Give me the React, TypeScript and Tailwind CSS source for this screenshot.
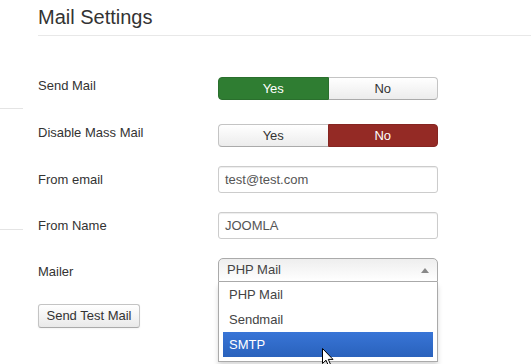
import React from "react";

type YesNoProps = {
  value: "yes" | "no";
};

const baseBtn =
  "flex-1 flex items-center justify-center text-[13px] leading-none border";
const plainBtn =
  "bg-gradient-to-b from-white to-[#ececec] text-[#333] border-[#c4c4c4] border-b-[#aaa]";

function YesNo({ value }: YesNoProps) {
  const yesActive = value === "yes";
  return (
    <div className="flex h-[23px] w-[220px]">
      <div
        className={
          baseBtn +
          " rounded-l-[4px] " +
          (yesActive
            ? "bg-[#2f7d32] border-[#2a6f2d] text-white"
            : plainBtn + " border-r-0")
        }
      >
        Yes
      </div>
      <div
        className={
          baseBtn +
          " rounded-r-[4px] " +
          (!yesActive
            ? "bg-[#942a25] border-[#852521] text-white"
            : plainBtn + " border-l-0")
        }
      >
        No
      </div>
    </div>
  );
}

// mouse pointer hovering the SMTP option
function Cursor() {
  return (
    <svg width="12" height="19" viewBox="0 0 12 19" className="absolute left-[322px] top-[348px] z-20">
      <path
        d="M0.5 0.5 L0.5 15.5 L4 12.2 L6.6 18 L8.8 17 L6.3 11.4 L11 11.4 Z"
        fill="#fff"
        stroke="#000"
        strokeWidth="1"
        strokeLinejoin="round"
      />
    </svg>
  );
}

export default function App() {
  const options = ["PHP Mail", "Sendmail", "SMTP"];

  return (
    <div className="relative flex h-[364px] w-[531px] overflow-hidden bg-white font-['Liberation_Sans',Arial,sans-serif] text-[#333]">
      <aside className="w-[23px] shrink-0">
        <div className="mt-[108px] h-px bg-[#e4e4e4]" />
        <div className="mt-[120px] h-px bg-[#e4e4e4]" />
      </aside>

      <main className="flex-1 pl-[15px]">
        <h2 className="pt-[6px] pb-[7px] text-[20px] leading-[22px] font-normal text-[#333] border-b border-[#e8e8e8]">
          Mail Settings
        </h2>

        <div className="mt-[41px] flex items-start">
          <label className="w-[180px] text-[13px] leading-[18px]">Send Mail</label>
          <YesNo value="yes" />
        </div>

        <div className="mt-[24px] flex items-start">
          <label className="w-[180px] text-[13px] leading-[18px]">Disable Mass Mail</label>
          <YesNo value="no" />
        </div>

        <div className="mt-[19px] flex items-start">
          <label className="w-[180px] pt-[5px] text-[13px] leading-[18px]">From email</label>
          <div className="flex h-[27px] w-[220px] items-center rounded-[3px] border border-[#ccc] px-[6px] text-[13px] text-[#555] shadow-[inset_0_1px_1px_rgba(0,0,0,0.075)]">
            test@test.com
          </div>
        </div>

        <div className="mt-[19px] flex items-start">
          <label className="w-[180px] pt-[5px] text-[13px] leading-[18px]">From Name</label>
          <div className="flex h-[27px] w-[220px] items-center rounded-[3px] border border-[#ccc] px-[6px] text-[13px] text-[#555] shadow-[inset_0_1px_1px_rgba(0,0,0,0.075)]">
            JOOMLA
          </div>
        </div>

        <div className="mt-[19px] flex items-start">
          <label className="w-[180px] pt-[5px] text-[13px] leading-[18px]">Mailer</label>
          <div className="relative w-[220px]">
            <div className="flex h-[24px] items-center justify-between rounded-t-[5px] border border-[#aaa] bg-gradient-to-b from-[#eee] to-white pl-[8px] pr-[8px] text-[13px] text-[#444]">
              <span>PHP Mail</span>
              <svg width="8" height="5" viewBox="0 0 8 5">
                <path d="M0 5 L4 0 L8 5 Z" fill="#888" />
              </svg>
            </div>
            <div className="absolute left-0 right-0 top-[24px] z-10 border border-t-0 border-[#aaa] bg-white shadow-[0_4px_5px_rgba(0,0,0,0.15)]">
              <ul className="mb-[4px] mr-[4px] pl-[4px]">
                {options.map((o) => (
                  <li
                    key={o}
                    className={
                      "px-[6px] py-[5px] text-[13px] leading-[15px] " +
                      (o === "SMTP"
                        ? "bg-gradient-to-b from-[#3875d7] to-[#2a62bc] text-white"
                        : "text-[#444]")
                    }
                  >
                    {o}
                  </li>
                ))}
              </ul>
            </div>
          </div>
        </div>

        <button
          type="button"
          className="mt-[22px] flex h-[24px] w-[102px] items-center justify-center rounded-[3px] border border-[#c4c4c4] border-b-[#aaa] bg-gradient-to-b from-white to-[#e9e9e9] text-[13px] text-[#333] shadow-[0_1px_2px_rgba(0,0,0,0.05)]"
        >
          Send Test Mail
        </button>
      </main>

      <Cursor />
    </div>
  );
}
